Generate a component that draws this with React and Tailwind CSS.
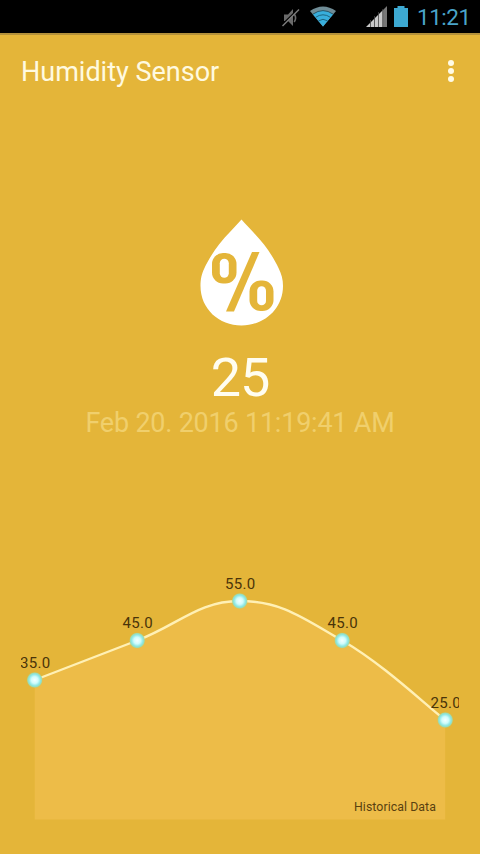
import React from 'react'

const points = [
  { x: 13.7, y: 110, label: '35.0' },
  { x: 116.2, y: 70.5, label: '45.0' },
  { x: 218.7, y: 31, label: '55.0' },
  { x: 321.2, y: 70.5, label: '45.0' },
  { x: 424.2, y: 150, label: '25.0' },
]

const BASELINE = 249.5
const INTENSITY = 0.2

// cubic line where each control point follows the slope of its neighbours
function linePath(pts) {
  let d = `M${pts[0].x} ${pts[0].y}`
  for (let i = 1; i < pts.length; i++) {
    const before = pts[Math.max(i - 2, 0)]
    const prev = pts[i - 1]
    const cur = pts[i]
    const next = pts[Math.min(i + 1, pts.length - 1)]
    const c1x = prev.x + (cur.x - before.x) * INTENSITY
    const c1y = prev.y + (cur.y - before.y) * INTENSITY
    const c2x = cur.x - (next.x - prev.x) * INTENSITY
    const c2y = cur.y - (next.y - prev.y) * INTENSITY
    d += ` C${c1x} ${c1y} ${c2x} ${c2y} ${cur.x} ${cur.y}`
  }
  return d
}

function MuteIcon() {
  return (
    <svg className="w-[19px] h-[22px]" viewBox="0 0 19 22" fill="none">
      <path d="M3 8.5h4L12 3v17L7 15H3z" fill="#6a6a6a" />
      <path d="M13.2 8q2.8 4 0 8" stroke="#6a6a6a" strokeWidth="1.6" />
      <path d="M1 18.8L17 3.3" stroke="#000" strokeWidth="1.6" />
      <path d="M1.5 20L18 3.5" stroke="#7c7c7c" strokeWidth="1.4" />
    </svg>
  )
}

function WifiIcon() {
  return (
    <svg className="w-[28px] h-[21px]" viewBox="0 0 28 21" fill="none">
      <path d="M14 20.5L1 5Q14-4 27 5z" fill="#6f8c96" />
      <path d="M14 20.5L3.8 8.2Q14 1 24.2 8.2z" fill="#38aedc" />
      <path d="M6.5 11.4Q14 6.2 21.5 11.4M9.5 14.8Q14 11.8 18.5 14.8" stroke="#1d6580" strokeWidth="1" />
      <path d="M3.8 8.2Q14 1 24.2 8.2" stroke="#1b4454" strokeWidth="0.8" />
    </svg>
  )
}

function SignalIcon() {
  return (
    <svg className="w-[21px] h-[22px]" viewBox="0 0 21 22">
      <path d="M0 21L17 4V21z" fill="#c9c9c9" />
      <path d="M17 4L21 0V21H17z" fill="#777" />
      <path d="M4.5 14V21M8.5 10V21M12.5 6V21M16.7 3V21" stroke="#444" strokeWidth="0.8" />
    </svg>
  )
}

function BatteryIcon() {
  return (
    <svg className="w-[14px] h-[21px]" viewBox="0 0 14 21" fill="#3da9d2">
      <path d="M3.5 0h7v2H14V21H0V2h3.5z" />
    </svg>
  )
}

function StatusBar() {
  return (
    <div className="h-[33px] bg-black flex items-start pl-[281px] pt-[6px] shrink-0">
      <MuteIcon />
      <div className="ml-[9px]"><WifiIcon /></div>
      <div className="ml-[29px]"><SignalIcon /></div>
      <div className="ml-[7px]"><BatteryIcon /></div>
      <span className="ml-[9px] text-[22.5px] leading-[23px] tracking-[-0.5px] text-[#4aa4c9] whitespace-nowrap">11:21</span>
    </div>
  )
}

function DropIcon() {
  return (
    <svg className="w-[84px] h-[108px]" viewBox="0 0 84 108">
      <path d="M41.5 0.5C35 8 26 16.5 19 25.5C12.5 34 7.5 42.5 4.5 49C1.5 55.5 0.5 60 0.5 67C0.5 90 19 106.5 41.5 106.5C64 106.5 83 90 83 67C83 60 81.5 55.5 78.5 49C75.5 42.5 70.5 34 64 25.5C57 16.5 48 8 41.5 0.5z" fill="#fff" />
      <g fill="#e4b539">
        <rect x="12" y="34" width="24.5" height="30.5" rx="11" />
        <rect x="49.5" y="61.5" width="24" height="30.5" rx="11" />
        <path d="M52 33h7.5L34 92.5h-8z" />
      </g>
      <g fill="#fff">
        <rect x="19.8" y="39.8" width="9" height="19" rx="4.5" />
        <rect x="57.2" y="67.3" width="8.8" height="19" rx="4.4" />
      </g>
    </svg>
  )
}

function HistoryChart() {
  const line = linePath(points)
  const first = points[0]
  const last = points[points.length - 1]
  return (
    <svg className="w-[438px] h-[250px] overflow-hidden" viewBox="0 0 438 250">
      <defs>
        <radialGradient id="dot">
          <stop offset="0%" stopColor="#f4ffff" />
          <stop offset="42%" stopColor="#d0fcfc" />
          <stop offset="72%" stopColor="#8ce7e4" />
          <stop offset="88%" stopColor="#9edbb0" />
          <stop offset="100%" stopColor="#b8cd79" stopOpacity="0.3" />
        </radialGradient>
      </defs>
      <path d={`${line} L${last.x} ${BASELINE} L${first.x} ${BASELINE}z`} fill="#edbc48" />
      <path d={line} fill="none" stroke="#fff0b5" strokeWidth="2.4" />
      {points.map((p) => (
        <g key={p.x}>
          <circle cx={p.x} cy={p.y} r="8" fill="url(#dot)" />
          <text x={p.x + 0.6} y={p.y - 12.4} textAnchor="middle" fontSize="15" letterSpacing="0.35" fill="#4a3409">
            {p.label}
          </text>
        </g>
      ))}
      <text x="415" y="240.5" textAnchor="end" fontSize="12.3" letterSpacing="0.08" fill="#594110">
        Historical Data
      </text>
    </svg>
  )
}

export default function App() {
  return (
    <div className="w-[480px] h-[854px] bg-[#e4b539] flex flex-col overflow-hidden font-['Roboto',sans-serif]">
      <StatusBar />
      <header className="h-[76px] border-t-2 border-[#b4913a] flex items-center justify-between pl-[21px] pr-[26px] shrink-0">
        <h1 className="text-[27px] leading-8 text-[#fffae0]">Humidity Sensor</h1>
        <div className="flex flex-col gap-[2px] -mt-[2px]">
          <span className="size-[6px] rounded-full bg-[#fffbe6]" />
          <span className="size-[6px] rounded-full bg-[#fffbe6]" />
          <span className="size-[6px] rounded-full bg-[#fffbe6]" />
        </div>
      </header>
      <main className="flex flex-col items-center pt-[110px]">
        <div className="pl-[3px]"><DropIcon /></div>
        <div className="mt-[19px] text-[54px] leading-[64px] tracking-[-1px] text-[#fffdf0]">25</div>
        <div className="-mt-[3px] text-[27px] leading-8 tracking-[-0.22px] text-[#f0cf6c] whitespace-nowrap">Feb 20. 2016 11:19:41 AM</div>
        <div className="mt-[131px]">
          <HistoryChart />
        </div>
      </main>
    </div>
  )
}
